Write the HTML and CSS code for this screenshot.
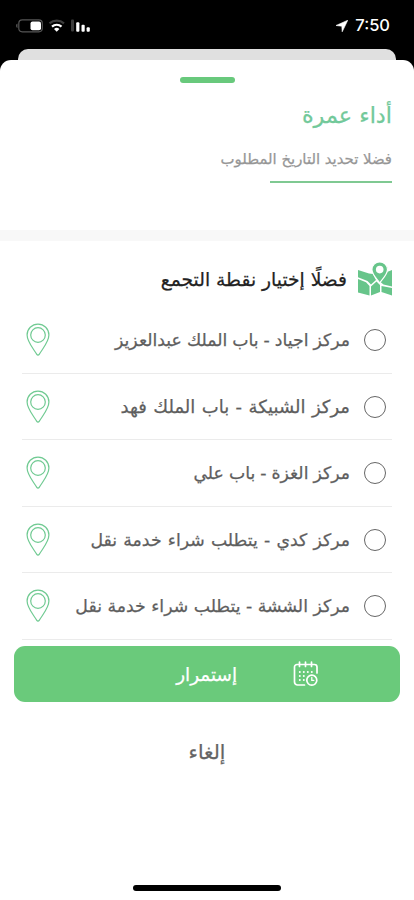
FILE: index.html
```html
<!DOCTYPE html>
<html lang="ar" dir="rtl">
<head>
<meta charset="utf-8">
<meta name="viewport" content="width=device-width, initial-scale=1">
<title>أداء عمرة</title>
<link rel="stylesheet" href="styles.css">
</head>
<body>
<svg width="0" height="0" class="defs">
  <symbol id="pin" viewBox="0 0 24 34">
    <path d="M12 1.100C5.900 1.100 1.100 5.900 1.100 12c0 6.500 5.400 12.500 9.700 19.400.6 1 1.800 1 2.400 0C17.500 24.500 22.900 18.500 22.900 12 22.900 5.900 18.100 1.100 12 1.100Z"/>
    <circle cx="12" cy="12" r="7.300"/>
  </symbol>
</svg>
<header class="status">
  <div class="clock">
    <span>7:50</span>
    <svg width="12" height="12" viewBox="0 0 12 12"><path d="M11.800.2 0 5.500l5.800.7.4 5.600Z" fill="#fff" stroke="#fff" stroke-width=".6"/></svg>
  </div>
  <svg class="signals" width="76" height="16" viewBox="0 0 76 16">
    <path d="M1.500 5.500v4.500Q0 9.500 0 7.750T1.500 5.500Z" fill="#555"/>
    <rect x="2.800" y="1.800" width="23.500" height="12" rx="3.500" fill="none" stroke="#555" stroke-width="1.200"/>
    <rect x="14.500" y="3.500" width="10.500" height="8.700" rx="2" fill="#fff"/>
    <path d="M33.500 5.400a11 11 0 0 1 14.500 0" fill="none" stroke="#3c3c3c" stroke-width="2.200"/>
    <path d="M36 8.600a7 7 0 0 1 9.500 0" fill="none" stroke="#fff" stroke-width="2.200"/>
    <path d="m38 11.100a4 4 0 0 1 5.400 0l-2.700 2.700Z" fill="#fff"/>
    <rect x="55" y="1.600" width="3" height="12" rx="1" fill="#3c3c3c"/>
    <rect x="60.200" y="4.200" width="3.200" height="9.500" rx="1" fill="#fff"/>
    <rect x="65.500" y="6.800" width="3.200" height="6.900" rx="1" fill="#fff"/>
    <rect x="70.600" y="9.200" width="3.200" height="4.500" rx="1" fill="#fff"/>
  </svg>
</header>
<div class="backsheet"></div>
<main class="sheet">
  <div class="grabber"></div>
  <section class="intro">
    <h1>أداء عمرة</h1>
    <p>فضلا تحديد التاريخ المطلوب</p>
    <div class="rule"></div>
  </section>
  <div class="band"></div>
  <section class="points">
    <h2>
      <svg width="34" height="34" viewBox="0 0 34 34">
        <path fill="#67c58a" d="M0 8 11 11.500 15 12 18 18 13 22.500 9.500 19 0 15.200ZM0 17 8 20.300 11.500 24V33.500L0 30.500ZM13 24.500 18.500 19.500 22 23V30L13 33.500ZM23.500 24 34 26V33.500L23.500 30ZM22.500 20 29 10 34 8V24.500L25.500 22.500Z"/>
        <path fill="#67c58a" stroke="#fff" stroke-width="1.200" d="M21.700-.2a7.800 7.800 0 0 0-7.800 7.800c0 4.800 4.300 8.500 7.800 13.400 3.500-4.900 7.800-8.600 7.800-13.400A7.800 7.800 0 0 0 21.700-.2Z"/>
        <circle cx="21.700" cy="7.600" r="3.800" fill="#fff"/>
      </svg>
      <span>فضلًا إختيار نقطة التجمع</span>
    </h2>
    <ul>
      <li><i class="radio"></i><span class="name tight">مركز اجياد - باب الملك عبدالعزيز</span><svg class="pin"><use href="#pin"/></svg></li>
      <li><i class="radio"></i><span class="name loose">مركز الشبيكة - باب الملك فهد</span><svg class="pin"><use href="#pin"/></svg></li>
      <li><i class="radio"></i><span class="name tight">مركز الغزة - باب علي</span><svg class="pin"><use href="#pin"/></svg></li>
      <li><i class="radio"></i><span class="name airy">مركز كدي - يتطلب شراء خدمة نقل</span><svg class="pin"><use href="#pin"/></svg></li>
      <li><i class="radio"></i><span class="name">مركز الششة - يتطلب شراء خدمة نقل</span><svg class="pin"><use href="#pin"/></svg></li>
    </ul>
  </section>
  <button class="continue">
    <svg width="26" height="26" viewBox="0 0 26 26" fill="none" stroke="#fff" stroke-width="1.700" stroke-linecap="round">
      <path d="M11.500 24H4.500a3 3 0 0 1-3-3V6a2.500 2.500 0 0 1 2.500-2.500H21.500A2.500 2.500 0 0 1 24 6v6M6.500 1v4.500M12.500 1v4.500M18.500 1v4.500"/>
      <circle cx="18.800" cy="19.200" r="5"/>
      <path stroke-width="1.300" d="M18.800 16.400v3h2"/>
      <path stroke-width="2" stroke-dasharray="0 4" d="M6.800 11H20M6.800 15H12M6.800 19H12"/>
    </svg>
    <span>إستمرار</span>
  </button>
  <button class="cancel">إلغاء</button>
  <div class="home"></div>
</main>
</body>
</html>
```
FILE: styles.css
```css
* { box-sizing: border-box; }
body {
  margin: 0;
  height: 900px;
  display: flex;
  flex-direction: column;
  overflow: hidden;
  background: #000;
  font-family: "DejaVu Sans", sans-serif;
}
.defs { position: absolute; }
.status {
  height: 49px;
  flex: none;
  display: flex;
  justify-content: space-between;
  align-items: flex-start;
  padding: 17px 24px 0 16px;
  color: #fff;
}
.clock { display: flex; align-items: center; gap: 7px; height: 17px; }
.clock span { font: 500 16.500px/17px Inter, sans-serif; }
.signals { margin-top: 1px; }
.backsheet {
  flex: none;
  height: 11px;
  margin: 0 18px;
  border-radius: 10px 10px 0 0;
  background: #e0e0e0;
}
.sheet {
  flex: 1;
  display: flex;
  flex-direction: column;
  background: #fff;
  border-radius: 11px 11px 0 0;
  -webkit-text-stroke: .25px currentColor;
}
.grabber {
  width: 55px;
  height: 6px;
  margin: 17px auto 0;
  border-radius: 3px;
  background: #68c97c;
}
.intro { height: 147px; padding: 16px 22px 0; }
h1, h2, p, ul { margin: 0; padding: 0; font-weight: 400; }
h1 { font-size: 22.300px; line-height: 32px; color: #72c99a; }
p { margin-top: 13px; font-size: 14.900px; line-height: 30px; color: #969696; white-space: nowrap; }
.rule { width: 122px; height: 1.500px; margin-top: 7px; background: #7fc992; }
.band { height: 11px; background: #f8f8f8; }
.points { padding: 0 22px; height: 405px; }
h2 {
  display: flex;
  align-items: center;
  gap: 11px;
  height: 66px;
  padding-top: 10px;
  font-size: 18.700px;
  color: #222;
  white-space: nowrap;
}
ul { list-style: none; }
li {
  display: flex;
  align-items: center;
  height: 66.500px;
  padding: 1px 6px 0 4px;
  border-bottom: 1.500px solid #ebebeb;
}
.radio { width: 22px; height: 22px; border: 1.200px solid #666; border-radius: 50%; }
.name {
  flex: 1;
  margin-right: 14px;
  font-size: 17.300px;
  line-height: 30px;
  color: #5e5e5e;
  white-space: nowrap;
}
.tight { word-spacing: -.5px; }
.loose { font-size: 18px; word-spacing: .7px; }
.airy { word-spacing: .7px; }
.pin { width: 24px; height: 34px; fill: none; stroke: #70ca92; stroke-width: 1.200; }
button { border: 0; padding: 0; font-family: inherit; }
.continue {
  display: flex;
  align-items: center;
  gap: 56px;
  height: 56px;
  margin: 0 14px;
  padding-right: 81px;
  border-radius: 11px;
  background: #6aca7b;
  color: #fff;
  font-size: 18.400px;
}
.cancel { height: 44px; margin: 28px auto 0; background: none; color: #646464; font-size: 20px; }
.home { width: 148px; height: 6px; margin: auto auto 9px; border-radius: 3px; background: #000; }
```
